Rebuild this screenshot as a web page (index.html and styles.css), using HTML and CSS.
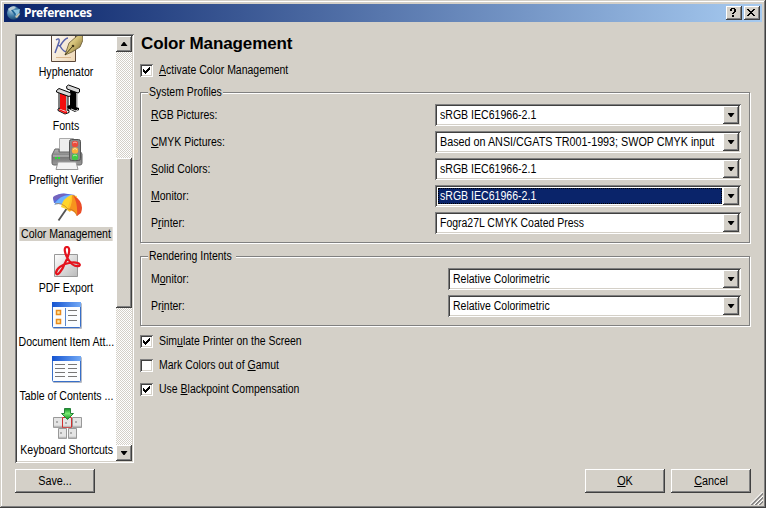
FILE: index.html
```html
<!DOCTYPE html>
<html lang="en">
<head>
<meta charset="utf-8">
<title>Preferences</title>
<link rel="stylesheet" href="styles.css">
</head>
<body>
<div class="window">
  <header class="titlebar">
    <svg class="logo" viewBox="0 0 16 16"><defs><radialGradient id="orb" cx=".35" cy=".3" r=".8"><stop offset="0" stop-color="#a9c9dd"/><stop offset=".5" stop-color="#457fa9"/><stop offset="1" stop-color="#123c62"/></radialGradient></defs><circle cx="7.7" cy="8" r="6.7" fill="url(#orb)"/><path d="M2 4Q6 0 10 2L7 5 4 6Z" fill="#b9cbd2"/><path d="M5 5l7-1 1 3-3 6-2-4Z" fill="#1d6192"/><path d="M7 5l3 4-1 3 4-4 1-4Z" fill="#8ac1dd"/><path d="M9 12l4-4 1 1-3 4Z" fill="#d0c5ae"/></svg>
    <h1>Preferences</h1>
    <button class="tbtn"><svg viewBox="0 0 12 10" shape-rendering="crispEdges"><path d="M3 1h1V0h4v1h1v3H8v1H7v1H5V5h1V4h1V1H5v2H3zM5 7h2v2H5z"/></svg></button>
    <button class="tbtn"><svg viewBox="0 0 12 10" shape-rendering="crispEdges"><path d="M2 1h2v1h1v1h2V2h1V1h2v1H9v1H8v1H7v1h1v1h1v1h1v1H8V7H7V6H5v1H4v1H2V7h1V6h1V5h1V4H4V3H3V2H2z"/></svg></button>
  </header>
  <main class="body">
    <nav class="list">
      <div class="items">
        <div class="item"><svg viewBox="0 0 32 32"><defs><linearGradient id="paper" x2="1" y2="1"><stop stop-color="#fff"/><stop offset="1" stop-color="#eed7b5"/></linearGradient><linearGradient id="gold" x2="1" y2="1"><stop stop-color="#fff6c6"/><stop offset=".5" stop-color="#d1bd73"/><stop offset="1" stop-color="#6b5a28"/></linearGradient></defs><path d="M.5-1h24v32.500H.5z" fill="url(#paper)" stroke="#5a4638"/><path d="M5 10q4-3 3 2L4 23M17 8q-3 0-8 8 4 7 7 5M9 16l-2-1" fill="none" stroke="#5862a8" stroke-width="1.500"/><path d="M5 27.500h15" stroke="#dcb991"/><path d="M14 25L18 13 26 6 31 3 32 10 29 17 21 22Z" fill="url(#gold)" stroke="#6a5a35" stroke-width=".8"/><path d="M14 25l7-8" stroke="#413719"/><circle cx="22" cy="16" r="1.300" fill="#413719"/></svg><span class="label">Hyphenator</span></div>
        <div class="item"><svg viewBox="0 0 32 32"><g stroke-linejoin="round"><path d="M19 6l6 2v15l3 1v2l-4 2-8-4v-2l3-1z" fill="#000"/><path d="M25 9l1.500.5v13.500H25z" fill="#999"/><path d="M20 25l5 2 2-1.500" fill="none" stroke="#ddd"/><path d="M15.500 2.500l2-1.500 11 4v3l-1.500 1-11-4z" fill="#d8d8d8" stroke="#000"/><path d="M9 9l6 2v16l-6-2z" fill="#f20d0d"/><path d="M15 12h1.500v14.500l-1.500 1z" fill="#aaa"/><path d="M9 24l-2 1v1.500l7 3.500 4-1.500V26.500l-2-.5" fill="none" stroke="#000"/><path d="M8 25l6 2.500 2-.5v2l-2 .5-6-3z" fill="#f20d0d"/><path d="M8 9v15.500M17 12v14" stroke="#000"/><path d="M5.500 6.500l2.500-2 12 4.500v2.500L18 12.500 5.500 8z" fill="#d8d8d8" stroke="#000"/></g></svg><span class="label">Fonts</span></div>
        <div class="item"><svg viewBox="0 0 32 32"><defs><linearGradient id="metal" y2="1" x2="0"><stop stop-color="#b8b8b8"/><stop offset=".5" stop-color="#777"/><stop offset="1" stop-color="#9c9c9c"/></linearGradient></defs><path d="M8.500.5h14v14h-14z" fill="#eee" stroke="#aaa"/><path d="M4 11h4v3h17v-3h3l3 5v9q0 2-2 2H3q-2 0-2-2v-8z" fill="url(#metal)" stroke="#666"/><path d="M2 18h18" stroke="#c9c9c9"/><path d="M7 24h18l2 7.500H5z" fill="#f3f3f3" stroke="#999"/><path d="M4 19h2v2H4zM7 19h2v2H7z" fill="#28de35"/><rect x="18.500" y="1.500" width="11" height="21" rx="2" fill="#888" stroke="#555"/><circle cx="24" cy="6" r="3.200" fill="#ec4b3c"/><circle cx="24" cy="12.500" r="3.200" fill="#fbb13a"/><circle cx="24" cy="19" r="3.200" fill="#41cb45"/><path d="M22 5q2-2 4 0M22 11.500q2-2 4 0M22 18q2-2 4 0" stroke="#fff" stroke-opacity=".6" fill="none"/></svg><span class="label">Preflight Verifier</span></div>
        <div class="item selected"><svg viewBox="0 0 32 32"><path d="M17.500 14L7.500 28.500" stroke="#555" stroke-width="1.800"/><path d="M2 6Q8 0 17 2L24 3 16 14Q10 9 3 11Z" fill="#536ce0"/><path d="M2 5q6-4 14-3L3 9Z" fill="#7464bd"/><path d="M20 3Q9 2 3 13q7-3 13 3z" fill="#6cb2ff"/><path d="M20 3Q12 6 10 15l10 4 6-15z" fill="#ffd52b"/><path d="M21 3Q26 10 19 20l-3-2z" fill="#ffc229"/><path d="M21 3Q31 9 26 24q-2-5-8-6 4-8 3-15z" fill="#f7931e"/><path d="M22 3q12 7 8 18l-4 3q1-13-4-21z" fill="#eb4d28"/><path d="M4 12q7-2 13 5 7 0 9 7" fill="none" stroke="#b86b24" stroke-width=".6"/></svg><span class="label">Color Management</span></div>
        <div class="item"><svg viewBox="0 0 32 32"><defs><linearGradient id="plate" x2="1" y2="1"><stop stop-color="#fff"/><stop offset="1" stop-color="#bbb"/></linearGradient></defs><path d="M3.500 8.500h23v22h-23z" fill="url(#plate)" stroke="#999"/><path d="M16 1c-4 0-2 7 1 12 3 5 7 8 11 7 3-2-3-5-10-3C11 18 5 23 5 27c1 4 6-2 9-10 4-7 6-16 2-16z" fill="none" stroke="#e5131d" stroke-width="2.200"/></svg><span class="label">PDF Export</span></div>
        <div class="item"><svg viewBox="0 0 32 32"><defs><linearGradient id="bar"><stop stop-color="#1554d1"/><stop offset="1" stop-color="#72a9f5"/></linearGradient></defs><rect x="2" y="3" width="29" height="26" rx="1" fill="#b9bcc4"/><rect x="1.500" y="2.500" width="28" height="25" rx="1" fill="#fbfdff" stroke="#386fc8"/><path d="M1 2h29v5H1z" fill="url(#bar)"/><path d="M14.500 8v18" stroke="#5a87cd"/><path d="M5.500 10.500h4v4h-4zM5.500 19.500h4v4h-4z" fill="#ffe7a1" stroke="#e98b1d" stroke-width="1.500"/><path d="M17 10.500h9M17 15.500h9M17 20.500h9" stroke="#777"/></svg><span class="label">Document Item Att...</span></div>
        <div class="item"><svg viewBox="0 0 32 32"><rect x="2" y="3" width="29" height="26" rx="1" fill="#b9bcc4"/><rect x="1.500" y="2.500" width="28" height="25" rx="1" fill="#fbfdff" stroke="#386fc8"/><path d="M1 2h29v5H1z" fill="url(#bar)"/><path d="M4 10.500h10M17 10.500h9M4 14.500h10M17 14.500h9M4 18.500h10M17 18.500h9M4 22.500h10M17 22.500h9" stroke="#777"/></svg><span class="label">Table of Contents ...</span></div>
        <div class="item"><svg viewBox="0 0 32 32"><defs><linearGradient id="arrow" x2="0" y2="1"><stop stop-color="#118a24"/><stop offset=".45" stop-color="#7bed72"/><stop offset="1" stop-color="#108c21"/></linearGradient></defs><g fill="#e4e4e4" stroke="#999"><path d="M2.500 9.500h9v10h-9zM21.500 9.500h9v10h-9zM7.500 20.500h8v10h-8zM17.500 20.500h8v10h-8z"/><path d="M11.500 9.500h9v10h-9z" stroke="#d12e2e"/></g><path d="M3 18.500h8M12 18.500h8M22 18.500h8M8 29.500h7M18 29.500h7" stroke="#bbb" stroke-width="1.500"/><path d="M6 13v2M15 14v2M25 13v2M10 24v2M20 24v2" stroke="#777"/><path d="M13.500.5h6v5h3l-6 6-6-6h3z" fill="url(#arrow)" stroke="#26833a"/></svg><span class="label">Keyboard Shortcuts</span></div>
      </div>
      <div class="scrollbar">
        <div class="sbtn"><i class="up"></i></div>
        <div class="thumb"></div>
        <div class="sbtn"><i class="down"></i></div>
      </div>
    </nav>
    <section class="panel">
      <h2>Color Management</h2>
      <div class="check first"><span class="box"><svg viewBox="0 0 7 7" shape-rendering="crispEdges"><path d="M0 2h1v1h1v1h1V3h1V2h1V1h1V0h1v3H6v1H5v1H4v1H3v1H2V6H1V5H0z"/></svg></span><span class="t"><u>A</u>ctivate Color Management</span></div>
      <div class="group profiles">
        <div class="legend"><span class="t">System Profiles</span></div>
        <div class="row"><span class="t"><u>R</u>GB Pictures:</span><div class="combo"><div class="value"><span class="t srgb">sRGB IEC61966-2.1</span></div><b><i class="down"></i></b></div></div>
        <div class="row"><span class="t"><u>C</u>MYK Pictures:</span><div class="combo"><div class="value"><span class="t swop">Based on ANSI/CGATS TR001-1993; SWOP CMYK input</span></div><b><i class="down"></i></b></div></div>
        <div class="row"><span class="t"><u>S</u>olid Colors:</span><div class="combo"><div class="value"><span class="t srgb">sRGB IEC61966-2.1</span></div><b><i class="down"></i></b></div></div>
        <div class="row"><span class="t"><u>M</u>onitor:</span><div class="combo focus"><div class="value"><span class="t srgb">sRGB IEC61966-2.1</span></div><b><i class="down"></i></b></div></div>
        <div class="row"><span class="t">P<u>r</u>inter:</span><div class="combo"><div class="value"><span class="t">Fogra27L CMYK Coated Press</span></div><b><i class="down"></i></b></div></div>
      </div>
      <div class="group intents">
        <div class="legend"><span class="t">Rendering Intents</span></div>
        <div class="row"><span class="t">M<u>o</u>nitor:</span><div class="combo"><div class="value"><span class="t">Relative Colorimetric</span></div><b><i class="down"></i></b></div></div>
        <div class="row"><span class="t">Pr<u>i</u>nter:</span><div class="combo"><div class="value"><span class="t">Relative Colorimetric</span></div><b><i class="down"></i></b></div></div>
      </div>
      <div class="check"><span class="box"><svg viewBox="0 0 7 7" shape-rendering="crispEdges"><path d="M0 2h1v1h1v1h1V3h1V2h1V1h1V0h1v3H6v1H5v1H4v1H3v1H2V6H1V5H0z"/></svg></span><span class="t">Sim<u>u</u>late Printer on the Screen</span></div>
      <div class="check"><span class="box"></span><span class="t">Mark Colors out of <u>G</u>amut</span></div>
      <div class="check"><span class="box"><svg viewBox="0 0 7 7" shape-rendering="crispEdges"><path d="M0 2h1v1h1v1h1V3h1V2h1V1h1V0h1v3H6v1H5v1H4v1H3v1H2V6H1V5H0z"/></svg></span><span class="t">Use <u>B</u>lackpoint Compensation</span></div>
    </section>
  </main>
  <footer>
    <button class="btn save"><span>Save...</span></button>
    <button class="btn"><span><u>O</u>K</span></button>
    <button class="btn"><span><u>C</u>ancel</span></button>
  </footer>
  <svg class="grip" viewBox="0 0 13 13"><path d="M0 12.500L12.500 0M4 13L13 4M8 13l5-5" stroke="#fff"/><path d="M1 13L13 1M2 13L13 2M5 13l8-8M6 13l7-7M9 13l4-4M10 13l3-3" stroke="#808080" stroke-width=".9"/></svg>
</div>
</body>
</html>
```
FILE: styles.css
```css
* { box-sizing: border-box; }
body { margin: 0; font: 12px/14px "Liberation Sans", Arial, sans-serif; color: #000; }
h1, h2 { margin: 0; }
button { font: inherit; color: #000; padding: 0; }
svg { display: block; }
u { text-decoration: underline; text-decoration-thickness: 1px; text-underline-offset: 1px; text-decoration-skip-ink: none; }

.window {
  position: relative;
  width: 766px; height: 508px;
  padding: 4px;
  background: #d4d0c8;
  box-shadow: inset -1px -1px #404040, inset 1px 1px #d4d0c8, inset -2px -2px #808080, inset 2px 2px #fff;
}
.titlebar {
  display: flex; align-items: center;
  height: 18px; padding: 0 2px 0 2px;
  background: linear-gradient(90deg, #0a246a, #a6caf0);
}
.logo { width: 16px; height: 16px; margin-right: 2px; }
.titlebar h1 { flex: 1; font: bold 12px/18px "Noto Sans", sans-serif; color: #fff; letter-spacing: -.3px; }
.tbtn, .btn, .sbtn, .thumb, .combo b {
  border: 0; background: #d4d0c8;
  box-shadow: inset -1px -1px #404040, inset 1px 1px #fff, inset -2px -2px #808080;
}
.tbtn { width: 16px; height: 14px; padding: 2px 2px 2px 1px; }
.tbtn + .tbtn { margin-left: 2px; }
.tbtn svg { width: 12px; height: 10px; }

.body { display: flex; height: 429px; margin: 12px 11px 0; }
.list {
  display: flex; width: 119px; height: 429px; padding: 2px; background: #fff;
  box-shadow: inset 1px 1px #808080, inset -1px -1px #fff, inset 2px 2px #404040, inset -2px -2px #d4d0c8;
}
.items { width: 99px; overflow: hidden; }
.items .item:first-child { margin-top: -6px; }
.item { display: flex; flex-direction: column; align-items: center; height: 54px; }
.item svg { flex: none; width: 32px; height: 32px; }
.label { margin-top: 3px; white-space: nowrap; transform: scaleX(.88); }
.selected .label { padding: 0 2px; background: #d4d0c8; }
.scrollbar {
  display: flex; flex-direction: column; width: 16px;
  background: repeating-conic-gradient(#fff 0 25%, #d4d0c8 0 50%) 0 0 / 2px 2px;
}
.sbtn { display: flex; align-items: center; justify-content: center; height: 16px; }
.thumb { height: 150px; margin: 106px 0 auto; }
.up, .down { width: 7px; height: 4px; background: #000; clip-path: polygon(0 0, 100% 0, 57% 100%, 43% 100%); }
.up { clip-path: polygon(43% 0, 57% 0, 100% 100%, 0 100%); }

.panel { width: 611px; margin-left: 6px; }
h2 { height: 20px; padding-left: 1px; font: bold 17px/20px "Liberation Sans", sans-serif; letter-spacing: -.1px; white-space: nowrap; }
.t { display: block; transform: scaleX(.873); transform-origin: 0 50%; white-space: nowrap; }
.check { display: flex; align-items: center; height: 24px; }
.check.first { height: 16px; margin: 8px 0 14px; }
.box {
  width: 13px; height: 13px; padding: 3px; margin-right: 6px; background: #fff;
  box-shadow: inset 1px 1px #808080, inset -1px -1px #fff, inset 2px 2px #404040, inset -2px -2px #d4d0c8;
}
.box svg { width: 7px; height: 7px; }
.group { width: 610px; border: 1px solid #808080; box-shadow: 1px 1px #fff, inset 1px 1px #fff; padding: 0 8px 0 10px; }
.profiles { height: 151px; }
.intents { height: 70px; margin: 13px 0 3px; }
.legend { width: 88px; height: 14px; margin: -8px 0 5px -3px; padding-left: 1px; background: #d4d0c8; }
.profiles .legend { width: 75px; }
.row { display: flex; align-items: center; justify-content: space-between; height: 22px; }
.row + .row { margin-top: 5px; }
.combo {
  display: flex; width: 306px; height: 22px; padding: 2px; background: #fff;
  box-shadow: inset 1px 1px #808080, inset -1px -1px #fff, inset 2px 2px #404040, inset -2px -2px #d4d0c8;
}
.intents .combo { width: 293px; }
.value { flex: 1; min-width: 0; height: 16px; margin: 1px; padding: 1px 0 0 2px; }
.focus .value { background: #0a246a; color: #fff; outline: 1px dotted #000; outline-offset: -1px; }
.srgb { transform: scaleX(.88); }
.swop { transform: scaleX(.898); }
.combo b { display: flex; align-items: center; justify-content: center; width: 16px; height: 18px; }

footer { display: flex; gap: 6px; margin: 6px 11px 0; }
.btn { width: 80px; height: 24px; }
.btn span { display: block; transform: scaleX(.9); }
.save { margin-right: auto; }
.grip { position: absolute; right: 3px; bottom: 3px; width: 13px; height: 13px; }
```
